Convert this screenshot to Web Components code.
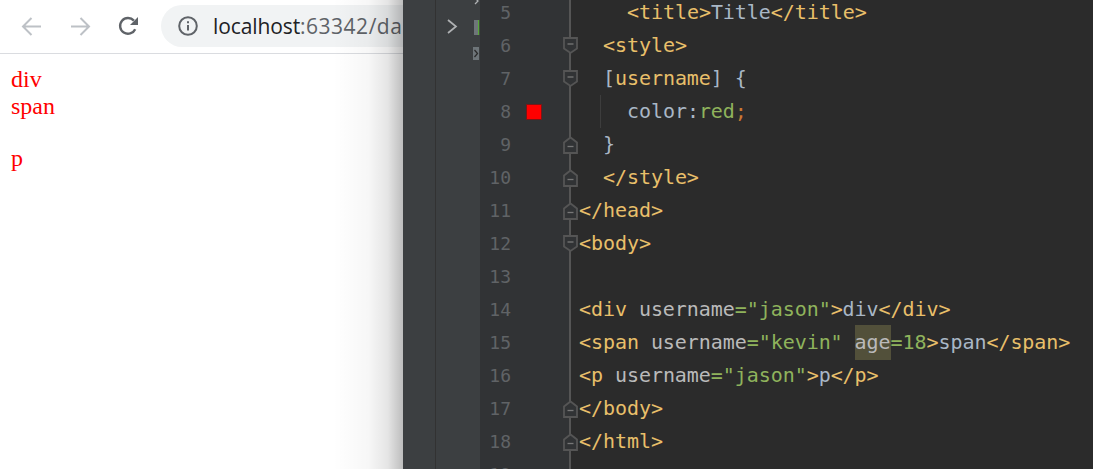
<!DOCTYPE html>
<html>
<head>
<meta charset="utf-8">
<title>Title</title>
<style>
html, body { margin: 0; height: 100%; overflow: hidden; background: #fff; }
body { display: flex; }
</style>
</head>
<body>
<browser-pane>
    <browser-toolbar url-host="localhost" url-rest=":63342/da"></browser-toolbar>
    <div>div</div>
    <span>span</span>
    <p>p</p>
</browser-pane>
<ide-window>
    <code-line n="5" indent="4"><span class="t">&lt;title&gt;</span><span class="x">Title</span><span class="t">&lt;/title&gt;</span></code-line>
    <code-line n="6" indent="2" fold="down"><span class="t">&lt;style&gt;</span></code-line>
    <code-line n="7" indent="2" fold="down"><span class="x">[</span><span class="t">username</span><span class="x">] {</span></code-line>
    <code-line n="8" indent="4" swatch guide><span class="x">color:</span><span class="s">red</span><span class="k">;</span></code-line>
    <code-line n="9" indent="2" fold="up"><span class="x">}</span></code-line>
    <code-line n="10" indent="2" fold="up"><span class="t">&lt;/style&gt;</span></code-line>
    <code-line n="11" fold="up"><span class="t">&lt;/head&gt;</span></code-line>
    <code-line n="12" fold="down"><span class="t">&lt;body&gt;</span></code-line>
    <code-line n="13"></code-line>
    <code-line n="14"><span class="t">&lt;div </span><span class="a">username</span><span class="s">="jason"</span><span class="t">&gt;</span><span class="x">div</span><span class="t">&lt;/div&gt;</span></code-line>
    <code-line n="15"><span class="t">&lt;span </span><span class="a">username</span><span class="s">="kevin"</span> <span class="a hl">age</span><span class="s">=18</span><span class="t">&gt;</span><span class="x">span</span><span class="t">&lt;/span&gt;</span></code-line>
    <code-line n="16"><span class="t">&lt;p </span><span class="a">username</span><span class="s">="jason"</span><span class="t">&gt;</span><span class="x">p</span><span class="t">&lt;/p&gt;</span></code-line>
    <code-line n="17" fold="up"><span class="t">&lt;/body&gt;</span></code-line>
    <code-line n="18" fold="up"><span class="t">&lt;/html&gt;</span></code-line>
    <code-line n="19"></code-line>
</ide-window>

<script>
class BrowserToolbar extends HTMLElement {
    constructor() {
        super();
        this.attachShadow({ mode: 'open' });
        this.shadowRoot.innerHTML = `
            <style>
                :host {
                    display: flex;
                    align-items: center;
                    box-sizing: border-box;
                    height: 54px;
                    padding: 0 0 1px 21px;
                    border-bottom: 1px solid #dadce0;
                    overflow: hidden;
                }
                svg { flex: none; display: block; }
                .back { margin-right: 28px; }
                .next { margin-right: 27px; }
                .reload { margin-right: 22px; }
                .pill {
                    flex: 1;
                    min-width: 0;
                    display: flex;
                    align-items: center;
                    height: 42px;
                    margin-right: -40px;
                    padding-left: 17px;
                    border-radius: 21px 0 0 21px;
                    background: #f1f3f4;
                    font: 21px "Open Sans", sans-serif;
                    letter-spacing: 0.5px;
                    white-space: nowrap;
                    color: #5f6368;
                }
                .pill svg { margin-right: 15px; }
                b { font-weight: 400; color: #202124; letter-spacing: -0.1px; }
            </style>
            <svg class="back" width="21" height="21" viewBox="0 0 21 21" fill="none" stroke="#bdc1c6" stroke-width="2"><path d="M20 10.5H2M10.5 2 2 10.5 10.5 19"/></svg>
            <svg class="next" width="21" height="21" viewBox="0 0 21 21" fill="none" stroke="#bdc1c6" stroke-width="2"><path d="M1 10.5h18M10.5 2 19 10.5 10.5 19"/></svg>
            <svg class="reload" width="21" height="21" viewBox="0 0 21 21" fill="none"><path d="M17.2 13.2A7.9 7.9 0 1 1 15.9 4.6" stroke="#5f6368" stroke-width="2.4"/><path d="M20 1v8h-8z" fill="#5f6368"/></svg>
            <div class="pill">
                <svg width="20" height="20" viewBox="0 0 20 20" fill="none"><circle cx="10" cy="10" r="8.8" stroke="#5f6368" stroke-width="2"/><path d="M10 9v5.5M10 5.3v2" stroke="#5f6368" stroke-width="2"/></svg>
                <span><b>${this.getAttribute('url-host')}</b>${this.getAttribute('url-rest')}</span>
            </div>
        `;
    }
}

class BrowserPane extends HTMLElement {
    constructor() {
        super();
        this.attachShadow({ mode: 'open' });
        this.shadowRoot.innerHTML = `
            <style>
                :host {
                    display: block;
                    position: relative;
                    flex: none;
                    width: 403px;
                    height: 100%;
                    overflow: hidden;
                    font: 24px/27px "Liberation Serif", serif;
                    color: #f00;
                }
                .page { padding: 12px 11px; }
                ::slotted(p) { margin: 25px 0 0; }
                ::slotted(div) { display: block; }
                .shade {
                    position: absolute;
                    top: 0;
                    right: 0;
                    bottom: 0;
                    width: 70px;
                    pointer-events: none;
                    background: linear-gradient(to right, rgba(0,0,0,0), rgba(0,0,0,.03) 50%, rgba(0,0,0,.1) 78%, rgba(0,0,0,.26));
                }
            </style>
            <slot name="bar"></slot>
            <div class="page"><slot></slot></div>
            <div class="shade"></div>
        `;
        this.querySelector('browser-toolbar').slot = 'bar';
    }
}

class IdeWindow extends HTMLElement {
    constructor() {
        super();
        this.attachShadow({ mode: 'open' });
        this.shadowRoot.innerHTML = `
            <style>
                :host {
                    display: flex;
                    flex: 1;
                    min-width: 0;
                    height: 100%;
                    overflow: hidden;
                    background: #2b2b2b;
                }
                .tools {
                    flex: none;
                    box-sizing: border-box;
                    width: 33px;
                    background: #3c3f41;
                    border-right: 1px solid #323232;
                }
                .project {
                    flex: none;
                    width: 44px;
                    background: #3c3f41;
                }
                .project svg { display: block; }
                .editor { flex: 1; min-width: 0; margin-top: -4px; }
            </style>
            <div class="tools"></div>
            <div class="project">
                <svg width="44" height="62" viewBox="0 0 44 62">
                    <path d="M39 -2l3 3-3 3" fill="none" stroke="#afb1b3" stroke-width="1.300"/>
                    <path d="M12 20l8 6.500-8 6.500" fill="none" stroke="#afb1b3" stroke-width="1.700"/>
                    <rect x="38" y="20" width="4" height="15" fill="#6e7579"/>
                    <rect x="42" y="20" width="1.200" height="15" fill="#59a83a"/>
                    <rect x="37" y="47" width="6" height="13" fill="#6e7579"/>
                    <path d="M38.500 50l3 3.500-3 3.500" fill="none" stroke="#2b2b2b" stroke-width="1.300"/>
                </svg>
            </div>
            <div class="editor"><slot></slot></div>
        `;
    }
}

class CodeLine extends HTMLElement {
    constructor() {
        super();
        this.attachShadow({ mode: 'open' });
        const indent = Number(this.getAttribute('indent') || 0);
        const fold = this.getAttribute('fold');
        const folds = {
            down: 'M1 2h13v10.500l-6.500 4.500-6.500-4.500z',
            up: 'M1 18v-10.500l6.500-5 6.500 5v10.500z'
        };
        const foldMark = fold ? `
            <svg width="15" height="20" viewBox="0 0 15 20">
                <path d="${folds[fold]}" fill="#313335" stroke="#555" stroke-width="1.800"/>
                <path d="M4.500 ${fold === 'up' ? 11.500 : 8}h6" stroke="#777" stroke-width="1.300"/>
            </svg>` : '';
        this.shadowRoot.innerHTML = `
            <style>
                :host {
                    display: grid;
                    grid-template-columns: 31px 52px 16px 1fr;
                    height: 33px;
                    background: #2b2b2b;
                }
                .num {
                    background: #313335;
                    color: #606366;
                    font: 18px/33px "DejaVu Sans Mono", monospace;
                    text-align: right;
                }
                .mark {
                    background: #313335;
                    display: flex;
                    align-items: center;
                    padding-left: 15px;
                }
                .swatch {
                    box-sizing: border-box;
                    width: 16px;
                    height: 16px;
                    background: #f00;
                    border: 1px solid #7a1616;
                }
                .fold {
                    display: flex;
                    align-items: center;
                    background: linear-gradient(to right, #313335 0 6px, #555 6px 8px, #2b2b2b 8px);
                }
                .fold svg { display: block; }
                .code {
                    position: relative;
                    padding-left: ${indent * 12}px;
                    font: 20px/33px "DejaVu Sans Mono", monospace;
                    letter-spacing: -0.06px;
                    white-space: pre;
                    color: #a9b7c6;
                }
                .guide {
                    position: absolute;
                    left: 21px;
                    top: 0;
                    bottom: 0;
                    width: 1px;
                    background: #3d3d3d;
                }
                ::slotted(.t) { color: #e8bf6a; }
                ::slotted(.x) { color: #a9b7c6; }
                ::slotted(.a) { color: #bababa; }
                ::slotted(.s) { color: #8fb35c; }
                ::slotted(.k) { color: #cc7832; }
                ::slotted(.hl) { background: #52503a; padding: 5px 0 6px; }
            </style>
            <div class="num">${this.getAttribute('n')}</div>
            <div class="mark">${this.hasAttribute('swatch') ? '<div class="swatch"></div>' : ''}</div>
            <div class="fold">${foldMark}</div>
            <div class="code">${this.hasAttribute('guide') ? '<div class="guide"></div>' : ''}<slot></slot></div>
        `;
    }
}

customElements.define('browser-toolbar', BrowserToolbar);
customElements.define('browser-pane', BrowserPane);
customElements.define('ide-window', IdeWindow);
customElements.define('code-line', CodeLine);
</script>
</body>
</html>
